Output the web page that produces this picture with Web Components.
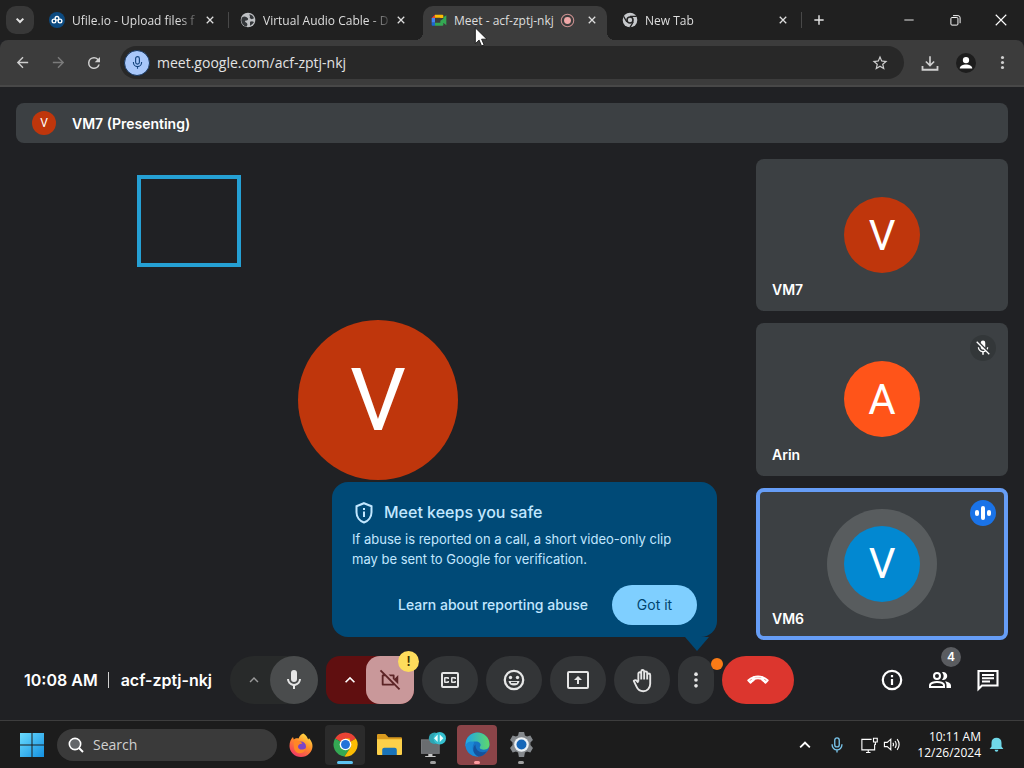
<!DOCTYPE html>
<html lang="en">
<head>
<meta charset="utf-8">
<meta name="viewport" content="width=device-width, initial-scale=1">
<title>Meet - acf-zptj-nkj</title>
<style>
  html, body { margin: 0; height: 100%; }
  body { background: #202124; font-family: "Open Sans", sans-serif; color: #e3e3e3; }
</style>
</head>
<body>
<desk-top>
  <tab-strip slot="chrome">
    <browser-tab icon="ufile" label="Ufile.io - Upload files f" line></browser-tab>
    <browser-tab icon="globe" label="Virtual Audio Cable - D"></browser-tab>
    <browser-tab icon="meet" label="Meet - acf-zptj-nkj" active recording></browser-tab>
    <browser-tab icon="chromegrey" label="New Tab" line></browser-tab>
  </tab-strip>
  <browser-toolbar slot="chrome" url="meet.google.com/acf-zptj-nkj"></browser-toolbar>
  <meet-room slot="page">
    <presenter-bar slot="header" name="VM7 (Presenting)"></presenter-bar>
    <meet-stage slot="stage"></meet-stage>
    <meet-tile slot="tiles" name="VM7" letter="V" color="#bf360c"></meet-tile>
    <meet-tile slot="tiles" name="Arin" letter="A" color="#ff5419" status="muted"></meet-tile>
    <meet-tile slot="tiles" name="VM6" letter="V" color="#0288d1" status="talking"></meet-tile>
    <meet-controls slot="controls">
      <safety-tip slot="tip">If abuse is reported on a call, a short video-only clip may be sent to Google for verification.</safety-tip>
    </meet-controls>
  </meet-room>
  <task-bar slot="taskbar"></task-bar>
</desk-top>

<script>
const ICONS = {
  down: '<path d="M7 10l5 5 5-5" fill="none" stroke="currentColor" stroke-width="3"/>',
  up: '<path d="M7.400 15.400L12 10.800l4.600 4.600L18 14l-6-6-6 6z"/>',
  close: '<path d="M5.500 5.500l13 13M18.500 5.500l-13 13" fill="none" stroke="currentColor" stroke-width="2.600"/>',
  plus: '<path d="M12 4v16M4 12h16" fill="none" stroke="currentColor" stroke-width="2.500"/>',
  back: '<path d="M20 11H7.830l5.590-5.590L12 4l-8 8 8 8 1.410-1.410L7.830 13H20z"/>',
  forward: '<path d="M12 4l-1.410 1.410L16.170 11H4v2h12.170l-5.580 5.590L12 20l8-8z"/>',
  reload: '<path d="M17.650 6.350A7.950 7.950 0 0 0 12 4a8 8 0 1 0 7.730 10h-2.080A6 6 0 1 1 12 6c1.660 0 3.140.69 4.220 1.780L13 11h7V4z"/>',
  star: '<path d="M22 9.240l-7.190-.62L12 2 9.190 8.630 2 9.240l5.460 4.730L5.820 21 12 17.270 18.180 21l-1.630-7.030zM12 15.400l-3.760 2.270 1-4.280-3.320-2.880 4.380-.38L12 6.100l1.710 4.040 4.380.38-3.320 2.880 1 4.280z"/>',
  download: '<path d="M12 3v12M6.500 10l5.500 5.500L17.500 10" fill="none" stroke="currentColor" stroke-width="2.200"/><path d="M2 16v5h20v-5" fill="none" stroke="currentColor" stroke-width="2.400"/>',
  person: '<circle cx="12" cy="12" r="12" fill="#1d1d1d"/><circle cx="12" cy="8.500" r="3.800"/><path d="M4.500 18.500c0-3.200 4-4.800 7.500-4.800s7.500 1.600 7.500 4.800z"/>',
  dots: '<circle cx="12" cy="5" r="2.200"/><circle cx="12" cy="12" r="2.200"/><circle cx="12" cy="19" r="2.200"/>',
  mic: '<path d="M12 14a3 3 0 0 0 3-3V5a3 3 0 0 0-6 0v6a3 3 0 0 0 3 3z"/><path d="M17 11a5 5 0 0 1-10 0H5a7 7 0 0 0 6 6.920V21h2v-3.080A7 7 0 0 0 19 11z"/>',
  micline: '<path d="M12 2.500a3 3 0 0 1 3 3v6a3 3 0 0 1-6 0v-6a3 3 0 0 1 3-3zM5.500 11v1a6.500 6.500 0 0 0 13 0v-1M12 18.500V22" fill="none" stroke="currentColor" stroke-width="1.800"/>',
  micoff: '<path d="M19 11h-1.700c0 .74-.16 1.430-.43 2.050l1.230 1.230c.56-.98.9-2.090.9-3.280zm-4.020.170c0-.06.020-.11.020-.17V5a3 3 0 0 0-6 0v.18zM4.270 3L3 4.270l6.010 6.010V11a3 3 0 0 0 3.660 2.940l1.660 1.660c-.71.330-1.500.52-2.330.52-2.760 0-5.300-2.100-5.300-5.120H5c0 3.410 2.720 6.230 6 6.720V21h2v-3.280c.91-.13 1.770-.45 2.540-.9L19.730 21 21 19.730z"/>',
  camoff: '<path d="M9.560 8L2.300.700.900 2.100 4.730 6H4a1 1 0 0 0-1 1v10a1 1 0 0 0 1 1h12c.210 0 .390-.08.550-.18L21.700 23l1.400-1.400-9.500-9.600zM5 16V8h1.730l8 8zM15 8v2.610l6 6V6.500l-4 4V7a1 1 0 0 0-1-1h-5.610l2 2z"/>',
  cc: '<path d="M19 4H5a2 2 0 0 0-2 2v12a2 2 0 0 0 2 2h14a2 2 0 0 0 2-2V6a2 2 0 0 0-2-2zm0 14H5V6h14zM7 15h3a1 1 0 0 0 1-1v-1H9.500v.5h-2v-3h2v.5H11v-1a1 1 0 0 0-1-1H7a1 1 0 0 0-1 1v4a1 1 0 0 0 1 1zm7 0h3a1 1 0 0 0 1-1v-1h-1.500v.5h-2v-3h2v.5H18v-1a1 1 0 0 0-1-1h-3a1 1 0 0 0-1 1v4a1 1 0 0 0 1 1z"/>',
  smile: '<circle cx="12" cy="12" r="9.200" fill="none" stroke="currentColor" stroke-width="2.300"/><circle cx="15.500" cy="9.500" r="1.700"/><circle cx="8.500" cy="9.500" r="1.700"/><path d="M6.500 13h11a5.600 5.600 0 0 1-11 0z"/><path d="M9 14.500h6" stroke="#333538" stroke-width="1.200"/>',
  present: '<path d="M21 3H3a2 2 0 0 0-2 2v14a2 2 0 0 0 2 2h18a2 2 0 0 0 2-2V5a2 2 0 0 0-2-2zm0 16H3V5h18zM11 16h2v-4h3l-4-4-4 4h3z"/>',
  hand: '<path d="M8 13V5.500a1.400 1.400 0 0 1 2.800 0V3.300a1.400 1.400 0 0 1 2.800 0v1.400a1.400 1.400 0 0 1 2.900 0v2a1.400 1.400 0 0 1 2.900 0V15c0 4.200-2.900 7.300-6.700 7.300-3 0-5.100-1.500-6.300-4.200l-2.800-5.700c.9-1.100 2.300-.9 3 .1L8 14M10.800 11V5M13.600 11V4M16.500 11V6" fill="none" stroke="currentColor" stroke-width="1.800" stroke-linejoin="round"/>',
  hang: '<path d="M3.200 14.600C8 8.600 16 8.600 20.800 14.600" fill="none" stroke="currentColor" stroke-width="2.400"/><g fill="none" stroke="currentColor" stroke-width="2" stroke-linejoin="round"><path d="M1.300 12.400C3 10.700 5 9.500 7.200 8.800v3.800c-1.200.6-2.300 1.400-3.300 2.400z"/><path d="M22.700 12.400c-1.700-1.700-3.700-2.900-5.900-3.600v3.800c1.200.6 2.300 1.400 3.300 2.400z"/><path d="M7 8.800c3.200-1 6.800-1 10 0"/></g><path d="M5 16c4-5.400 10-5.400 14 0v3H5z" fill="#dc362e"/>',
  info: '<circle cx="12" cy="12" r="9.200" fill="none" stroke="currentColor" stroke-width="2.200"/><path d="M10.900 11h2.200v6h-2.200zM10.900 7h2.200v2.200h-2.200z"/>',
  people: '<circle cx="9" cy="8" r="3" fill="none" stroke="currentColor" stroke-width="2"/><path d="M2 19v-1.500C2 14.800 6.500 14 9 14s7 .8 7 3.500V19z" fill="none" stroke="currentColor" stroke-width="2"/><path d="M14 4.200a4 4 0 1 1 0 7.600 5.700 5.700 0 0 0 0-7.600zM17 13.200c2.600.5 6 1.700 6 4.300V20h-4.500v-2.500c0-1.800-.5-3.200-1.500-4.300z"/>',
  chat: '<path d="M2.500 3h19v14.500H6L2.500 21z" fill="none" stroke="currentColor" stroke-width="2.100"/><path d="M6 6h12v2H6zM6 9.300h12v2H6zM6 12.600h8v2H6z"/>',
  shield: '<path d="M12 2.200l7.500 3v6c0 4.800-3.200 8.800-7.500 10.300-4.300-1.500-7.500-5.500-7.500-10.300v-6z" fill="none" stroke="currentColor" stroke-width="2"/><path d="M11 10.500h2V16h-2zM11 7h2v2h-2z"/>',
  record: '<circle cx="12" cy="12" r="10" fill="none" stroke="#c98f8f" stroke-width="1.700"/><circle cx="12" cy="12" r="5.500" fill="#f0a8a8"/>',
  ufile: '<circle cx="12" cy="12" r="12" fill="#0c4a80"/><g fill="none" stroke="#fff" stroke-width="2"><circle cx="7.500" cy="13.500" r="2.800"/><circle cx="12" cy="9.500" r="2.800"/><circle cx="16.500" cy="13.500" r="2.800"/></g>',
  globe: '<circle cx="12" cy="12" r="11" fill="#bfc1c4"/><path d="M3.500 8c2-2 4.500-1.500 6.500 0s3 2.500 1.500 4-4 0-4 2 3 2 3.500 4-1 4-2 4c-4-1.500-7-5.500-7-9 0-2 .5-4 1.500-5zM14 3.500c3.500.5 6 3 7 6l-3.500 1.500-3-2 .5-2zM15 14.500l3-.5 3 1c-1.500 3-3.500 4.500-6 5.500z" fill="#34373a"/>',
  meet: '<path d="M6 4h11a1.500 1.500 0 0 1 1.500 1.500V9H14V8.500H6z" fill="#fbbc04"/><path d="M6 4v5H1z" fill="#ea4335"/><path d="M1 9h5v7H1z" fill="#4285f4"/><path d="M1 16h5v4.500H2.500A1.500 1.500 0 0 1 1 19z" fill="#1967d2"/><path d="M6 16h8v-3l4.500-3V19a1.500 1.500 0 0 1-1.500 1.500H6zM18.500 8L23 4.800v15L18.500 16z" fill="#34a853"/>',
  chromegrey: '<circle cx="12" cy="12" r="11" fill="#c7c9cc"/><circle cx="12" cy="12" r="4.500" fill="#c7c9cc" stroke="#242424" stroke-width="2.400"/><path d="M12 6.500h10M7.300 15L2.300 6.400M16.800 15l-5 8.500" stroke="#242424" stroke-width="2"/>',
  minimise: '<path d="M4 12h16" stroke="currentColor" stroke-width="1.500"/>',
  restore: '<path d="M3.500 8.500a2 2 0 0 1 2-2h9a2 2 0 0 1 2 2v10a2 2 0 0 1-2 2h-9a2 2 0 0 1-2-2zM7.500 3h9a4 4 0 0 1 4 4v10" fill="none" stroke="currentColor" stroke-width="1.800"/>',
  cross: '<path d="M3 3l18 18M21 3L3 21" stroke="currentColor" stroke-width="1.900"/>',
  windows: '<defs><linearGradient id="w" x2="1" y2="1"><stop stop-color="#6bdcff"/><stop offset="1" stop-color="#1490e0"/></linearGradient></defs><g fill="url(#w)"><path d="M0 0h11.500v11.500H0zM12.500 0H24v11.500H12.500zM0 12.500h11.500V24H0zM12.500 12.500H24V24H12.500z"/></g>',
  search: '<circle cx="10.500" cy="10.500" r="8.500" fill="#64676a" stroke="currentColor" stroke-width="2.400"/><path d="M16.500 16.500l6 6" stroke="currentColor" stroke-width="2.800"/>',
  firefox: '<defs><linearGradient id="f" x1=".8" y1="0" x2=".2" y2="1"><stop stop-color="#ffe545"/><stop offset=".45" stop-color="#ff8a2a"/><stop offset="1" stop-color="#f0306a"/></linearGradient></defs><path d="M14.500.500c3 1.800 4 4 4.600 6l1-1.200C22.500 8 23.500 10.500 23.500 13a11.500 11 0 0 1-23 0C.500 9 1.800 6 4 4l.8 2.500C6 5.500 8 5 9.500 5.500c1.300-3.300 3-4.500 5-5z" fill="url(#f)"/><circle cx="12" cy="13.500" r="5" fill="#7b44c8"/><path d="M5 8c3-1.500 6 0 8.500 2.500-2 0-4.500 1-4.500 3.200 0 3 5 4 8 1.300-1 4.500-5 6-8 5s-5-4-4-12z" fill="#ff8726"/>',
  chrome: '<path d="M12 12L2 6.200A11.600 11.600 0 0 1 22 6.200z" fill="#ea4335"/><path d="M12 12L2 6.200A11.600 11.600 0 0 0 11 23.600l6-9z" fill="#34a853"/><path d="M12 12l10-5.800h-10zM22 6.200A11.600 11.600 0 0 1 11 23.600l6-9-1-8.400z" fill="#fbbc04"/><circle cx="12" cy="12" r="5.600" fill="#fff"/><circle cx="12" cy="12" r="4.300" fill="#2373d9"/>',
  folder: '<path d="M0 3a1 1 0 0 1 1-1h7l3 3h12a1 1 0 0 1 1 1v5H0z" fill="#d99a1e"/><path d="M0 7h24v14a1 1 0 0 1-1 1H1a1 1 0 0 1-1-1z" fill="#fcd04a"/><path d="M5 22v-5a2 2 0 0 1 2-2h10a2 2 0 0 1 2 2v5z" fill="#1a73b8"/>',
  remote: '<path d="M0 7h18v14H0z" fill="#77797c"/><path d="M1 8h16v12H1z" fill="#6a6d70"/><path d="M7 21h4v2h3v1H4v-1h3z" fill="#c8c8c8"/><circle cx="13" cy="6" r="5.500" fill="#2da5b3"/><circle cx="18" cy="6" r="6" fill="#35c1d0"/><path d="M16 2.500L12.500 6l3.500 3.500zM18 2.500L21.500 6 18 9.500z" fill="#eaffff"/>',
  edge: '<defs><linearGradient id="e" x2="1"><stop stop-color="#1fa5e8"/><stop offset="1" stop-color="#5fd86a"/></linearGradient></defs><circle cx="12" cy="12" r="11.500" fill="#1673c4"/><path d="M.5 12a11.500 11.500 0 0 1 23 0c0 3-2 5-5.500 5-3 0-4.500-1.500-3.500-3 1.500-2.500-.5-5-4-5S1.500 11 .5 14z" fill="url(#e)"/><path d="M9 10c-3 4-2 11 4 13.400C7 24 1 20 .5 13 2 9 6 8.500 9 10z" fill="#1c8ad6"/><path d="M10 12c0 6 5 9 11 6.500-2 3.500-5 5-8 5-6-2-6-9-3-11.500z" fill="#15529c"/>',
  gear: '<path d="M9.500 0h5l.8 3.300 2 1.100 3.200-1 2.500 4.300-2.400 2.400v2.400L23 15.300l-2.500 4.300-3.200-1-2 1.100-.8 4.300h-5l-.8-4.300-2-1.100-3.200 1L1 15.300l2.400-2.800v-2.400L1 7.700l2.500-4.300 3.200 1 2-1.100z" fill="#85898d"/><circle cx="12" cy="12" r="7" fill="#eef2f5"/><circle cx="12" cy="12" r="4.800" fill="#1667b8"/>',
  display: '<path d="M15.500 4.500H2.500v14h17V11M8 22h6M11 18.500V22" fill="none" stroke="currentColor" stroke-width="1.500"/><path d="M18 3h5v5h-5zM20.500 8v4" fill="none" stroke="currentColor" stroke-width="1.500"/>',
  sound: '<path d="M2 9h4l5-4.500v15L6 15H2zM14 9.500c1 1.500 1 3.500 0 5M17 7c2 3 2 7 0 10M20 4.500c3.300 4.500 3.300 10.500 0 15" fill="none" stroke="currentColor" stroke-width="1.600"/>',
  bell: '<path d="M12 1a8 8 0 0 1 8 8v6l3 4H1l3-4V9a8 8 0 0 1 8-8zM9 20.500h6a3 3 0 0 1-6 0z"/>',
  pointer: '<path d="M4 1v19l4.500-4.300 3 7 3-1.300-3-6.800h6.300z" fill="#fff" stroke="#111" stroke-width="1"/>'
};
const icon = (name, size) =>
  `<svg aria-hidden="true" viewBox="0 0 24 24" width="${size}" height="${size}" fill="currentColor">${ICONS[name]}</svg>`;

const BASE = `:host,*{box-sizing:border-box}
  button,input{font:inherit;color:inherit;border:0;background:none;padding:0;margin:0;min-width:0}
  button{display:inline-flex;align-items:center;justify-content:center;cursor:default;flex:none}
  svg{display:block;flex:none}`;

function define(tag, css, html) {
  customElements.define(tag, class extends HTMLElement {
    constructor() {
      super();
      const t = document.createElement('template');
      t.innerHTML = `<style>${BASE}${css}</style>` + (typeof html === 'function' ? html(n => this.getAttribute(n) ?? '', n => this.hasAttribute(n)) : html);
      this.attachShadow({ mode: 'open' }).append(t.content.cloneNode(true));
    }
  });
}

define('desk-top', `
  :host{display:flex;flex-direction:column;min-height:100vh;position:relative;overflow:hidden}
  ::slotted([slot=page]){flex:1}
  .pointer{position:absolute;left:472px;top:27px;z-index:9}`,
  `<slot name="chrome"></slot><slot name="page"></slot><slot name="taskbar"></slot>
   <div class="pointer">${icon('pointer', 20)}</div>`);

define('tab-strip', `
  :host{display:flex;height:40px;background:#202020;padding-left:6px;align-items:center}
  .find{width:28px;height:28px;border-radius:10px;background:#383838;margin-right:7px}
  .tabs{display:flex;height:100%;padding-top:6px;min-width:0}
  .new{width:28px;height:28px}
  .win{display:flex;margin-left:auto;height:100%;color:#fff}
  .win button{width:46px}`,
  `<button class="find" aria-label="Search tabs">${icon('down', 16)}</button>
   <div class="tabs"><slot></slot></div>
   <button class="new" aria-label="New tab">${icon('plus', 14)}</button>
   <div class="win"><button aria-label="Minimise">${icon('minimise', 14)}</button>
   <button aria-label="Restore">${icon('restore', 13)}</button>
   <button aria-label="Close window">${icon('cross', 14)}</button></div>`);

define('browser-tab', `
  :host{display:flex;align-items:center;width:191px;min-width:0;font-size:12px;color:#dedede}
  .tab{position:relative;flex:1;min-width:0;height:100%;display:flex;align-items:center;padding:0 7px 6px 8px;border-radius:10px 10px 0 0}
  :host([active]) .tab{background:#3c3c3c}
  :host([active]) .tab::before,:host([active]) .tab::after{content:"";position:absolute;bottom:0;width:8px;height:8px}
  :host([active]) .tab::before{left:-8px;background:radial-gradient(circle at 0 0,transparent 8px,#3c3c3c 8px)}
  :host([active]) .tab::after{right:-8px;background:radial-gradient(circle at 100% 0,transparent 8px,#3c3c3c 8px)}
  .name{flex:1;justify-content:flex-start;white-space:nowrap;margin-left:7px;height:20px;
    -webkit-mask-image:linear-gradient(90deg,#000 calc(100% - 24px),transparent);mask-image:linear-gradient(90deg,#000 calc(100% - 24px),transparent)}
  :host([active]) .name{-webkit-mask-image:none;mask-image:none}
  .x{width:16px;height:16px}
  :host([active]) .x{margin-left:9px}
  .line{width:1px;height:16px;margin:0 3px 6px;background:transparent}
  :host([line]) .line{background:#484848}`,
  (a, h) => `<div class="tab">${icon(a('icon'), 16)}<button class="name">${a('label')}</button>
    ${h('recording') ? icon('record', 15) : ''}<button class="x" aria-label="Close tab">${icon('close', 12)}</button></div><span class="line"></span>`);

define('browser-toolbar', `
  :host{display:flex;align-items:center;height:47px;padding:0 4px;background:#3c3c3c;border-bottom:2px solid #484848;
    border-radius:8px 8px 0 0;color:#cfcfcf}
  button{width:36px;height:32px}
  .dim{color:#7b7b7b}
  .omni{flex:1;display:flex;align-items:center;height:33px;margin:0 8px;padding:0 6px 0 4px;border-radius:17px;background:#282828;min-width:0}
  .chip{width:26px;height:26px;border-radius:50%;background:#a8c7fa;border:1px solid #16365f;color:#12427c;display:grid;place-items:center;flex:none}
  input{flex:1;font-size:14px;color:#e3e3e3;margin-left:7px;outline:0}`,
  a => `<button aria-label="Back">${icon('back', 17)}</button><button class="dim" aria-label="Forward">${icon('forward', 17)}</button>
    <button aria-label="Reload">${icon('reload', 18)}</button>
    <div class="omni"><span class="chip">${icon('micline', 15)}</span><input aria-label="Address" value="${a('url')}">
    <button aria-label="Bookmark">${icon('star', 18)}</button></div>
    <button aria-label="Downloads">${icon('download', 18)}</button><button aria-label="Profile" style="color:#fff">${icon('person', 20)}</button>
    <button aria-label="Menu">${icon('dots', 17)}</button>`);

define('meet-room', `
  :host{display:flex;flex-direction:column;padding-top:16px;font-family:Inter,"Open Sans",sans-serif;color:#fff;background:#202124}
  .area{flex:1;display:grid;grid-template-columns:minmax(0,1fr) 252px;gap:16px;padding:16px 16px 0}
  .tiles{display:grid;grid-auto-rows:1fr;gap:12px}`,
  `<slot name="header"></slot><div class="area"><slot name="stage"></slot><div class="tiles"><slot name="tiles"></slot></div></div>
   <slot name="controls"></slot>`);

define('presenter-bar', `
  :host{display:flex;align-items:center;gap:16px;height:40px;margin:0 16px;padding:0 16px;border-radius:8px;background:#3c4043;font-size:14px;font-weight:600}
  .av{width:24px;height:24px;border-radius:50%;background:#bf360c;display:grid;place-items:center;font:12px Roboto,sans-serif}`,
  a => `<span class="av">V</span><span>${a('name')}</span>`);

define('meet-stage', `
  :host{display:grid;place-items:center;position:relative}
  .av{width:160px;height:160px;border-radius:50%;background:#bf360c;display:grid;place-items:center;font:88px Roboto,sans-serif}
  .mark{position:absolute;left:121px;top:16px;width:104px;height:92px;border:4px solid #25a0d4}`,
  `<div class="av">V</div><div class="mark"></div>`);

define('meet-tile', `
  :host{display:grid;place-items:center;position:relative;border-radius:8px;background:#3c4043;min-height:120px}
  :host([status=talking])::after{content:"";position:absolute;inset:0;border:4px solid #669df6;border-radius:8px}
  .av{width:76px;height:76px;border-radius:50%;display:grid;place-items:center;font:42px Roboto,sans-serif}
  :host([status=talking]) .av{box-shadow:0 0 0 17px #585c5e}
  .name{position:absolute;left:16px;bottom:11px;font-size:14px;line-height:20px;font-weight:600}
  .st{position:absolute;right:12px;top:12px;width:26px;height:26px;border-radius:50%;background:#333739;display:grid;place-items:center}
  :host([status=talking]) .st{background:#1a73e8}`,
  a => `<div class="av" style="background:${a('color')}">${a('letter')}</div><span class="name">${a('name')}</span>` +
    (a('status') === 'muted' ? `<span class="st">${icon('micoff', 18)}</span>` :
     a('status') === 'talking' ? `<span class="st"><svg width="18" height="18" viewBox="0 0 18 18" fill="#fff"><rect x="1" y="6" width="4" height="6" rx="2"/><rect x="7" y="2" width="4" height="14" rx="2"/><rect x="13" y="6" width="4" height="6" rx="2"/></svg></span>` : ''));

define('meet-controls', `
  :host{display:grid;grid-template-columns:1fr auto 1fr;align-items:center;height:80px;font-size:16px;font-weight:600}
  .meta{display:flex;align-items:center;white-space:nowrap;padding-left:24px}
  .meta i{width:1px;height:16px;background:#d0d0d0;margin:0 12px 0 10px}
  .mid{display:flex;gap:8px}
  .mid button{height:48px;width:56px;border-radius:28px;background:#333537;color:#e6e6e6}
  .pair{display:flex;background:#282a2a;border-radius:24px;position:relative}
  .mid .pair .ar{width:40px;background:none;color:#9a9a9a;padding-left:7px}
  .mid .pair .mic{width:48px;background:#4a4c4d}
  .cam{background:#600f10;border-radius:14px}
  .mid .cam .ar{color:#fff}
  .mid .cam .off{width:48px;border-radius:14px;background:#c9989a;color:#5c2426}
  .warn{position:absolute;right:-5px;top:-5px;width:21px;height:21px;border-radius:50%;background:#fddc5c;color:#3b2f00;font-size:13px;line-height:21px;text-align:center}
  .more{position:relative}
  .mid .more button{width:36px}
  .dot{position:absolute;right:-9px;top:2px;width:12px;height:12px;border-radius:50%;background:#fa7b17}
  ::slotted([slot=tip]){position:absolute;right:-3px;bottom:67px;z-index:5}
  .mid .end{width:72px;background:#dc362e;color:#fff}
  .side{display:flex;justify-content:flex-end;padding-right:12px}
  .side button{width:48px;height:48px;position:relative}
  .count{position:absolute;right:3px;top:-9px;width:20px;height:20px;border-radius:50%;background:#5a5c60;font-size:12px;line-height:20px}`,
  `<div class="meta"><span>10:08 AM</span><i></i><span>acf-zptj-nkj</span></div>
   <div class="mid">
    <div class="pair"><button class="ar" aria-label="Audio settings">${icon('up', 18)}</button><button class="mic" aria-label="Mute">${icon('mic', 24)}</button></div>
    <div class="pair cam"><button class="ar" aria-label="Video settings">${icon('up', 20)}</button><button class="off" aria-label="Camera off">${icon('camoff', 22)}</button><span class="warn">!</span></div>
    <button aria-label="Captions">${icon('cc', 24)}</button>
    <button aria-label="Reactions">${icon('smile', 24)}</button>
    <button aria-label="Present">${icon('present', 24)}</button>
    <button aria-label="Raise hand">${icon('hand', 25)}</button>
    <div class="more"><button aria-label="More options">${icon('dots', 20)}</button><span class="dot"></span><slot name="tip"></slot></div>
    <button class="end" aria-label="Leave call">${icon('hang', 22)}</button>
   </div>
   <div class="side"><button aria-label="Details">${icon('info', 24)}</button>
    <button aria-label="People">${icon('people', 24)}<span class="count">4</span></button>
    <button aria-label="Chat">${icon('chat', 24)}</button></div>`);

define('safety-tip', `
  :host{display:block;width:385px;padding:18px 20px 12px;border-radius:16px;background:#004a77;color:#c2e7ff;font-size:14px;line-height:20px;font-weight:400}
  :host::after{content:"";position:absolute;right:8px;top:100%;border:12px solid transparent;border-top:14px solid #004a77;border-bottom:0}
  h2{display:flex;align-items:center;gap:8px;margin:0 0 4px;font-size:16px;line-height:25px;font-weight:500}
  p{margin:0 0 16px;font-size:13px}
  .row{display:flex;align-items:center;justify-content:flex-end;gap:24px}
  a{color:inherit;text-decoration:none;font-weight:500}
  button{height:40px;width:85px;border-radius:20px;background:#7fcfff;color:#00456f}`,
  `<h2>${icon('shield', 24)}Meet keeps you safe</h2><p><slot></slot></p>
   <div class="row"><a href="#abuse">Learn about reporting abuse</a><button>Got it</button></div>`);

define('task-bar', `
  :host{display:flex;align-items:center;height:48px;padding:0 16px 0 12px;background:#1c1c1c;border-top:1px solid #3d3d3d;color:#fff}
  button{width:40px;height:40px}
  .box{display:flex;align-items:center;gap:9px;width:220px;height:32px;margin:0 4px 0 5px;padding:0 11px;border-radius:16px;background:#3a3a3a;font-size:14px}
  .box input{flex:1;outline:0}
  .box input::placeholder{color:#d0d0d0;opacity:1}
  .apps{display:flex;gap:4px}
  .apps button{position:relative;border-radius:4px}
  .apps .sel{background:#2b2b2b}
  .apps .alert{background:#8b4448}
  .apps .run::after{content:"";position:absolute;bottom:1px;width:6px;height:3px;border-radius:2px;background:#a0a0a0}
  .apps .sel::after{width:16px;background:#5cc4f2}
  .apps .alert::after{background:#ff9ba0}
  .tray{display:flex;align-items:center;margin-left:auto}
  .tray button{width:32px}
  .tray .net{width:50px;gap:5px;margin-left:2px}
  .clock{text-align:right;font-size:12px;line-height:16px;margin:0 3px 0 12px}
  .tray .bell{width:24px;color:#70d8e8}`,
  `<button aria-label="Start">${icon('windows', 24)}</button>
   <label class="box">${icon('search', 16)}<input placeholder="Search" aria-label="Search"></label>
   <div class="apps"><button aria-label="Firefox">${icon('firefox', 24)}</button>
    <button class="run sel" aria-label="Chrome">${icon('chrome', 25)}</button>
    <button aria-label="File Explorer">${icon('folder', 25)}</button>
    <button class="run" aria-label="Remote Desktop">${icon('remote', 25)}</button>
    <button class="run alert" aria-label="Edge">${icon('edge', 25)}</button>
    <button class="run" aria-label="Settings">${icon('gear', 25)}</button></div>
   <div class="tray"><button aria-label="Hidden icons">${icon('up', 22)}</button>
    <button aria-label="Microphone" style="color:#79c4ea">${icon('micline', 18)}</button>
    <button class="net" aria-label="Network and sound">${icon('display', 18)}${icon('sound', 17)}</button>
    <div class="clock">10:11 AM<br>12/26/2024</div>
    <button class="bell" aria-label="Notifications">${icon('bell', 15)}</button></div>`);
</script>
</body>
</html>
